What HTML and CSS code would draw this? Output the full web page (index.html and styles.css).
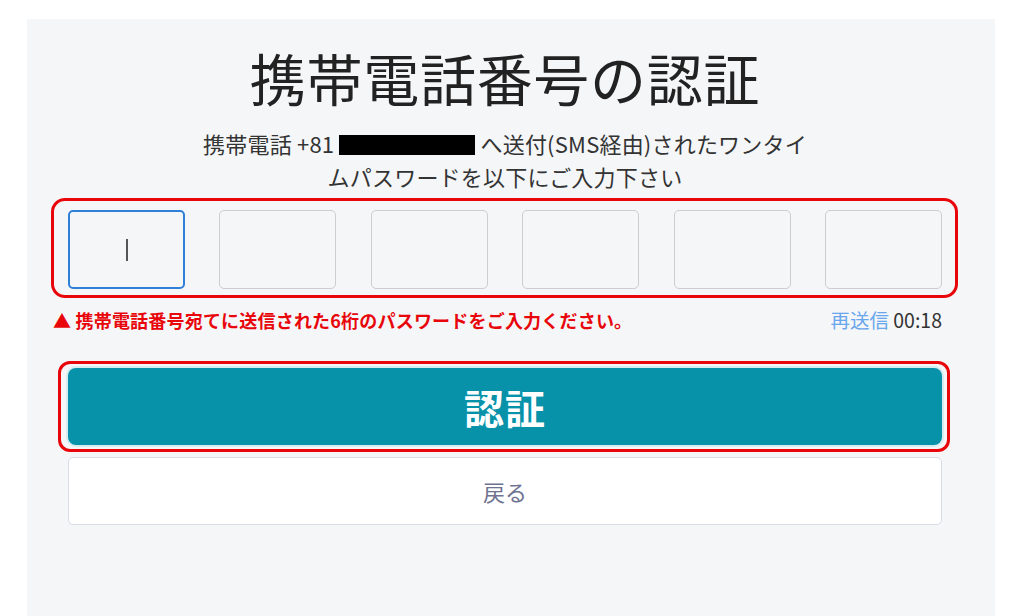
FILE: index.html
```html
<!DOCTYPE html>
<html lang="ja">
<head>
<meta charset="utf-8">
<title>携帯電話番号の認証</title>
<link rel="stylesheet" href="styles.css">
</head>
<body>
<main class="panel">
  <div class="column">
    <h1 class="title">携帯電話番号の認証</h1>
    <p class="lead">携帯電話 +81 <span class="masked"></span> へ送付(SMS経由)されたワンタイムパスワードを以下にご入力下さい</p>

    <div class="highlight code-highlight">
      <div class="code-row">
        <div class="code-box focused"><span class="caret"></span></div>
        <div class="code-box"></div>
        <div class="code-box"></div>
        <div class="code-box"></div>
        <div class="code-box"></div>
        <div class="code-box"></div>
      </div>
    </div>

    <div class="status-row">
      <p class="error">▲ 携帯電話番号宛てに送信された6桁のパスワードをご入力ください。</p>
      <p class="resend"><a class="resend-link">再送信</a> 00:18</p>
    </div>

    <div class="highlight btn-highlight">
      <button class="btn-primary" type="button">認証</button>
    </div>
    <button class="btn-back" type="button">戻る</button>
  </div>
</main>
</body>
</html>
```

FILE: styles.css
```css
* { box-sizing: border-box; }

html, body {
  margin: 0;
  padding: 0;
  background: #ffffff;
}

body {
  font-family: "Noto Sans CJK JP", "Noto Sans", sans-serif;
  color: #333;
  height: 616px;
  overflow: hidden;
}

.panel {
  margin: 19px 29px 0 27px;
  height: 597px;
  background: #f5f6f8;
  padding: 30px 53px 0 41px;
}

.column {
  display: flex;
  flex-direction: column;
}

.title {
  margin: 0;
  font-size: 56px;
  line-height: 56px;
  font-weight: 400;
  color: #222;
  text-align: center;
  letter-spacing: 0.7px;
}

.lead {
  margin: 22px auto 0;
  width: 610px;
  font-size: 22px;
  line-height: 33px;
  letter-spacing: 0.2px;
  color: #333;
  text-align: center;
}

.masked {
  display: inline-block;
  width: 136px;
  height: 20px;
  background: #000;
  vertical-align: -2px;
}

.highlight {
  border: 3px solid #e8060b;
  border-radius: 14px;
}

.code-highlight {
  margin: 5px -16px 0 -17px;
  padding: 9px 13px 6px 14px;
}

.code-row {
  display: flex;
  justify-content: space-between;
}

.code-box {
  width: 117px;
  height: 79px;
  border: 1.5px solid #cdcdd0;
  border-radius: 5px;
  background: #f5f6f8;
  display: flex;
  align-items: center;
  justify-content: center;
}

.code-box.focused {
  border: 2px solid #2f80d6;
}

.caret {
  width: 2px;
  height: 22px;
  background: #555;
}

.status-row {
  display: flex;
  justify-content: space-between;
  align-items: center;
  margin: 10px 0 0 -15px;
  height: 24px;
}

.error {
  margin: 0;
  font-size: 18px;
  line-height: 24px;
  font-weight: 700;
  letter-spacing: 0.2px;
  color: #e8060b;
}

.resend {
  margin: 0;
  font-size: 19.5px;
  line-height: 24px;
  color: #333;
}

.resend-link {
  color: #6aa6ec;
}

.btn-highlight {
  margin: 29px -8px 0 -10px;
  padding: 4px 5px 4px 7px;
  border-radius: 12px;
}

.btn-primary {
  display: block;
  width: 100%;
  height: 77px;
  border: 0;
  border-radius: 8px;
  background: #0792aa;
  box-shadow: 0 0 0 2px #d6ecf0;
  color: #fff;
  font-family: inherit;
  font-size: 40px;
  font-weight: 700;
  letter-spacing: 1px;
}

.btn-back {
  display: block;
  width: 100%;
  height: 68px;
  margin-top: 5px;
  border: 1px solid #dadbe5;
  border-radius: 5px;
  background: #fff;
  color: #6d7390;
  font-family: inherit;
  font-size: 22px;
  font-weight: 400;
}
```
